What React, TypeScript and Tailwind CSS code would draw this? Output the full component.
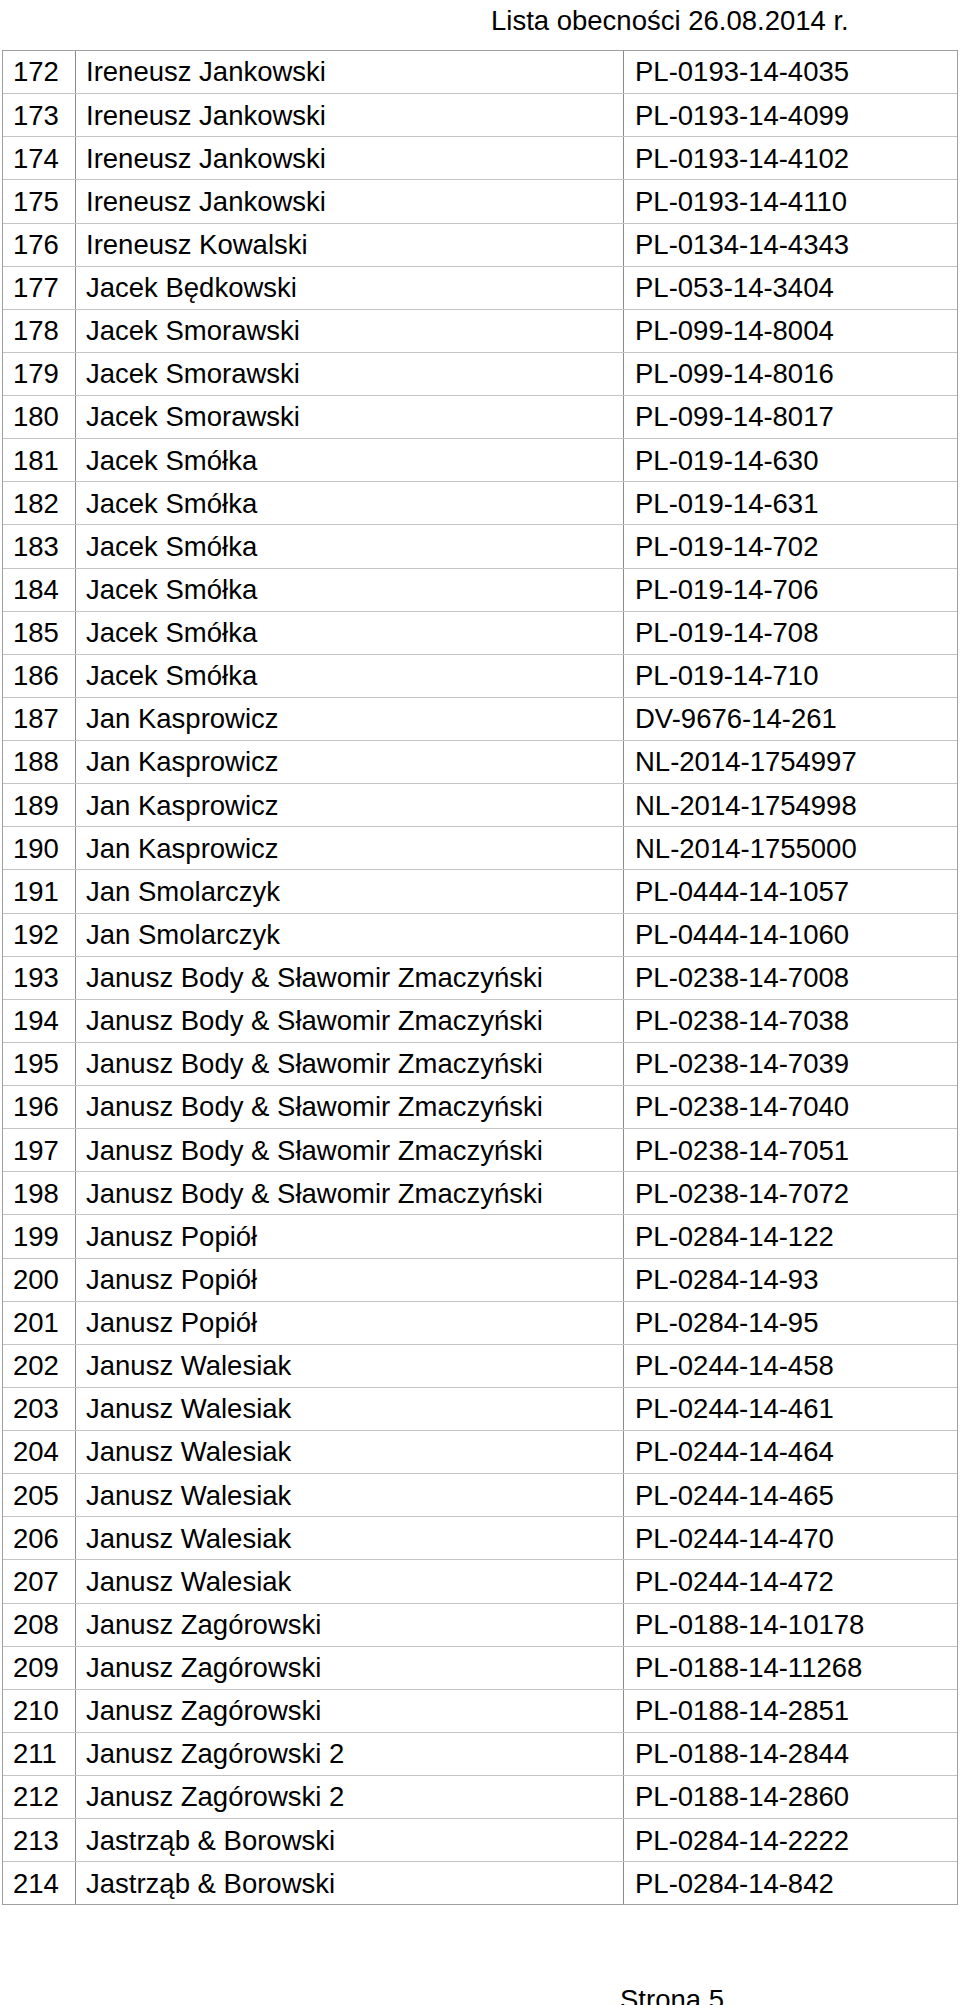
const rows: [string, string, string][] = [
  ["172", "Ireneusz Jankowski", "PL-0193-14-4035"],
  ["173", "Ireneusz Jankowski", "PL-0193-14-4099"],
  ["174", "Ireneusz Jankowski", "PL-0193-14-4102"],
  ["175", "Ireneusz Jankowski", "PL-0193-14-4110"],
  ["176", "Ireneusz Kowalski", "PL-0134-14-4343"],
  ["177", "Jacek Będkowski", "PL-053-14-3404"],
  ["178", "Jacek Smorawski", "PL-099-14-8004"],
  ["179", "Jacek Smorawski", "PL-099-14-8016"],
  ["180", "Jacek Smorawski", "PL-099-14-8017"],
  ["181", "Jacek Smółka", "PL-019-14-630"],
  ["182", "Jacek Smółka", "PL-019-14-631"],
  ["183", "Jacek Smółka", "PL-019-14-702"],
  ["184", "Jacek Smółka", "PL-019-14-706"],
  ["185", "Jacek Smółka", "PL-019-14-708"],
  ["186", "Jacek Smółka", "PL-019-14-710"],
  ["187", "Jan Kasprowicz", "DV-9676-14-261"],
  ["188", "Jan Kasprowicz", "NL-2014-1754997"],
  ["189", "Jan Kasprowicz", "NL-2014-1754998"],
  ["190", "Jan Kasprowicz", "NL-2014-1755000"],
  ["191", "Jan Smolarczyk", "PL-0444-14-1057"],
  ["192", "Jan Smolarczyk", "PL-0444-14-1060"],
  ["193", "Janusz Body & Sławomir Zmaczyński", "PL-0238-14-7008"],
  ["194", "Janusz Body & Sławomir Zmaczyński", "PL-0238-14-7038"],
  ["195", "Janusz Body & Sławomir Zmaczyński", "PL-0238-14-7039"],
  ["196", "Janusz Body & Sławomir Zmaczyński", "PL-0238-14-7040"],
  ["197", "Janusz Body & Sławomir Zmaczyński", "PL-0238-14-7051"],
  ["198", "Janusz Body & Sławomir Zmaczyński", "PL-0238-14-7072"],
  ["199", "Janusz Popiół", "PL-0284-14-122"],
  ["200", "Janusz Popiół", "PL-0284-14-93"],
  ["201", "Janusz Popiół", "PL-0284-14-95"],
  ["202", "Janusz Walesiak", "PL-0244-14-458"],
  ["203", "Janusz Walesiak", "PL-0244-14-461"],
  ["204", "Janusz Walesiak", "PL-0244-14-464"],
  ["205", "Janusz Walesiak", "PL-0244-14-465"],
  ["206", "Janusz Walesiak", "PL-0244-14-470"],
  ["207", "Janusz Walesiak", "PL-0244-14-472"],
  ["208", "Janusz Zagórowski", "PL-0188-14-10178"],
  ["209", "Janusz Zagórowski", "PL-0188-14-11268"],
  ["210", "Janusz Zagórowski", "PL-0188-14-2851"],
  ["211", "Janusz Zagórowski 2", "PL-0188-14-2844"],
  ["212", "Janusz Zagórowski 2", "PL-0188-14-2860"],
  ["213", "Jastrząb & Borowski", "PL-0284-14-2222"],
  ["214", "Jastrząb & Borowski", "PL-0284-14-842"],
];

export default function App() {
  return (
    <div
      className="w-[960px] h-[2005px] overflow-hidden bg-white text-black text-[27.5px] leading-normal"
      style={{ fontFamily: '"Liberation Sans", Arial, sans-serif' }}
    >
      <div className="h-[50px] pl-[491px] whitespace-nowrap">Lista obecności 26.08.2014 r.</div>
      <div className="ml-[2px] w-[956px] border border-[#a0a0a0]">
        {rows.map(([n, name, code], i) => (
          <div
            key={n}
            className={
              i < rows.length - 1
                ? "flex h-[43.14px] border-b border-[#c4c4c4]"
                : "flex h-[42.14px]"
            }
          >
            <div className="w-[73px] shrink-0 flex items-center pl-[10px] border-r border-[#8a8a8a]">{n}</div>
            <div className="w-[548px] shrink-0 flex items-center pl-[10px] border-r border-[#8a8a8a] whitespace-nowrap">{name}</div>
            <div className="flex-1 flex items-center pl-[11px] whitespace-nowrap">{code}</div>
          </div>
        ))}
      </div>
      <div className="mt-[74px] pl-[620px] whitespace-nowrap">Strona 5</div>
    </div>
  );
}
